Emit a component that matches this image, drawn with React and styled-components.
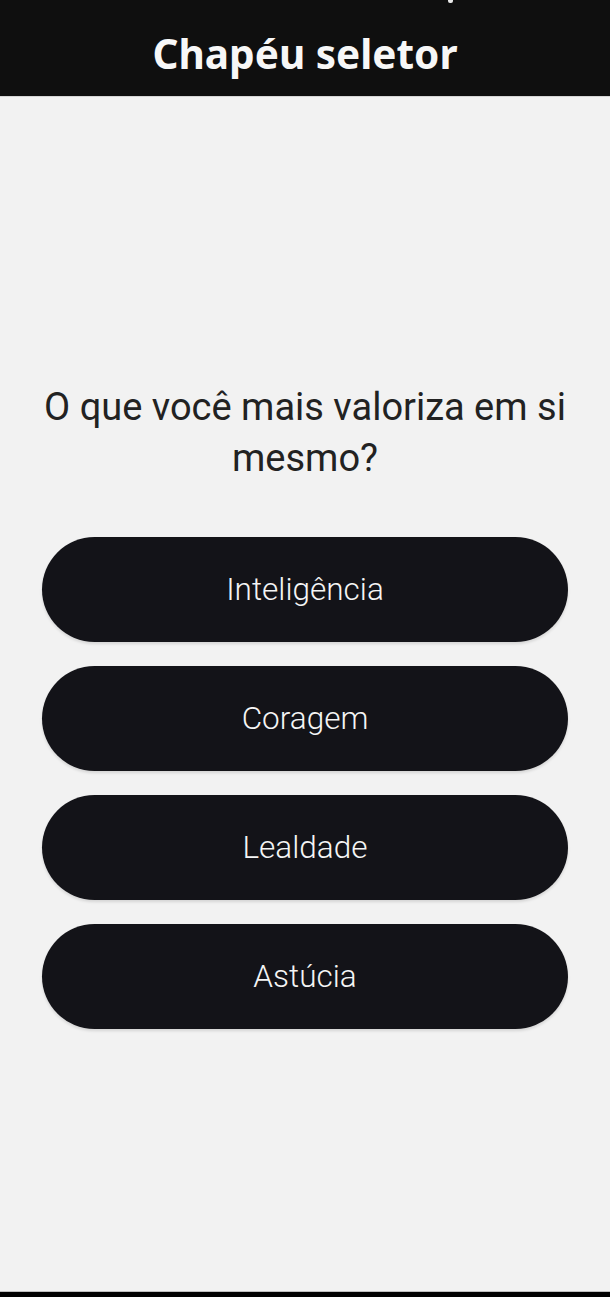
import React from 'react'
import styled, { createGlobalStyle } from 'styled-components'

const Global = createGlobalStyle`
  html, body {
    margin: 0;
    padding: 0;
    background: #f2f2f2;
  }
  #root {
    min-height: 100vh;
  }
`

const Page = styled.div`
  height: 1297px;
  display: flex;
  flex-direction: column;
  background: #f2f2f2;
  font-family: Roboto, "Noto Sans", sans-serif;
`

const Header = styled.header`
  position: relative;
  height: 96px;
  background: #0f0f0f;
  display: flex;
  align-items: center;
  justify-content: center;
  border-bottom: 1px solid #d6d6d6;
`

const Title = styled.h1`
  margin: 0;
  padding-top: 10px;
  color: #f7f7f7;
  font-family: "Noto Sans", sans-serif;
  font-weight: 700;
  font-size: 40.5px;
`

const StatusDot = styled.span`
  position: absolute;
  top: 0;
  left: 448px;
  width: 5px;
  height: 3px;
  background: #e8e8e8;
  border-radius: 0 0 2px 2px;
`

const Main = styled.main`
  flex: 1;
  display: flex;
  flex-direction: column;
  justify-content: center;
  align-items: center;
  padding: 22px 42px 0;
`

const Question = styled.p`
  margin: 0 0 53px;
  text-align: center;
  color: #222222;
  font-size: 38px;
  font-weight: 400;
  line-height: 51px;
`

const Options = styled.div`
  width: 100%;
  display: flex;
  flex-direction: column;
  gap: 24px;
`

const Option = styled.button`
  height: 105px;
  width: 100%;
  border: none;
  border-radius: 53px;
  background: #131318;
  color: #f5f5f5;
  font-family: Roboto, "Noto Sans", sans-serif;
  font-size: 31.5px;
  font-weight: 300;
  box-shadow: 0 2px 3px rgba(0, 0, 0, 0.12);
  cursor: pointer;
`

const BottomBar = styled.footer`
  height: 5px;
  background: #000;
  border-top: 1px solid #bdbdbd;
`

const options = ['Inteligência', 'Coragem', 'Lealdade', 'Astúcia']

export default function App() {
  return (
    <Page>
      <Global />
      <Header>
        <StatusDot />
        <Title>Chapéu seletor</Title>
      </Header>
      <Main>
        <Question>O que você mais valoriza em si mesmo?</Question>
        <Options>
          {options.map(o => (
            <Option key={o}>{o}</Option>
          ))}
        </Options>
      </Main>
      <BottomBar />
    </Page>
  )
}
